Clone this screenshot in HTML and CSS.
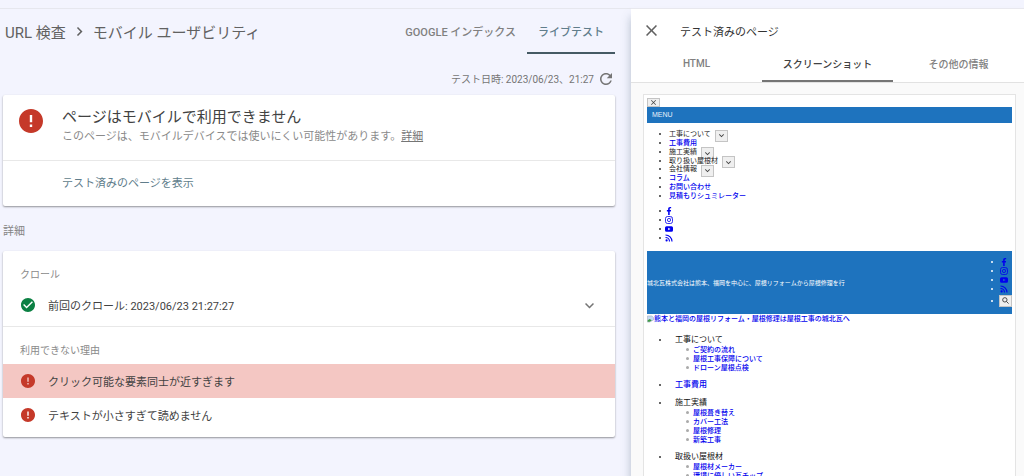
FILE: index.html
```html
<!DOCTYPE html>
<html lang="ja">
<head>
<meta charset="utf-8">
<title>URL 検査</title>
<link rel="stylesheet" href="styles.css">
</head>
<body>
<svg class="sprite" aria-hidden="true">
  <symbol id="error" viewBox="2 2 20 20"><path d="M12 2C6.48 2 2 6.48 2 12s4.48 10 10 10 10-4.48 10-10S17.52 2 12 2zm1 15h-2v-2h2v2zm0-4h-2V7h2v6z"/></symbol>
  <symbol id="check" viewBox="2 2 20 20"><path d="M12 2C6.48 2 2 6.48 2 12s4.48 10 10 10 10-4.48 10-10S17.52 2 12 2zm-2 15l-5-5 1.41-1.41L10 14.17l7.59-7.59L19 8l-9 9z"/></symbol>
  <symbol id="refresh" viewBox="4 4 16 16"><path d="M17.65 6.35C16.2 4.9 14.21 4 12 4c-4.42 0-7.99 3.58-7.99 8s3.57 8 7.99 8c3.73 0 6.84-2.55 7.73-6h-2.08c-.82 2.33-3.04 4-5.65 4-3.31 0-6-2.69-6-6s2.69-6 6-6c1.66 0 3.14.69 4.22 1.78L13 11h7V4l-2.35 2.35z"/></symbol>
  <symbol id="close" viewBox="5 5 14 14"><path d="M19 6.41L17.59 5 12 10.59 6.41 5 5 6.41 10.59 12 5 17.59 6.41 19 12 13.41 17.59 19 19 17.59 13.41 12z"/></symbol>
  <symbol id="down" viewBox="6 6 12 12"><path d="M16.59 8.59L12 13.17 7.41 8.59 6 10l6 6 6-6z"/></symbol>
  <symbol id="right" viewBox="6 6 12 12"><path d="M10 6L8.59 7.41 13.17 12l-4.58 4.59L10 18l6-6z"/></symbol>
  <symbol id="facebook" viewBox="-96 0 512 512"><path d="M279.14 288l14.22-92.66h-88.91v-60.13c0-25.35 12.42-50.06 52.24-50.06h40.42V6.26S260.43 0 225.36 0c-73.22 0-121.08 44.38-121.08 124.72v70.62H22.89V288h81.39v224h100.17V288z"/></symbol>
  <symbol id="instagram" viewBox="0 0 16 16"><g fill="none" stroke="currentColor" stroke-width="1.6"><rect x="1" y="1" width="14" height="14" rx="4"/><circle cx="8" cy="8" r="3.2"/></g><circle cx="12" cy="4" r="1"/></symbol>
  <symbol id="youtube" viewBox="0 0 16 16"><path fill-rule="evenodd" d="M3 2.5h10a3 3 0 0 1 3 3v5a3 3 0 0 1-3 3H3a3 3 0 0 1-3-3v-5a3 3 0 0 1 3-3zM6.4 5.4v5.2L11 8z"/></symbol>
  <symbol id="rss" viewBox="0 0 16 16"><circle cx="3.2" cy="12.8" r="2.2"/><g fill="none" stroke="currentColor" stroke-width="2.3"><path d="M1 7a8 8 0 0 1 8 8M1 2a13 13 0 0 1 13 13"/></g></symbol>
  <symbol id="search" viewBox="0 0 16 16"><g fill="none" stroke="currentColor" stroke-width="2.2"><circle cx="6.5" cy="6.5" r="5"/><path d="M10 10l5 5"/></g></symbol>
</svg>

<div class="app">
  <main class="main">
    <header class="topbar">
      <nav class="crumbs">
        <a href="#">URL 検査</a>
        <svg class="crumb-arrow"><use href="#right"/></svg>
        <span>モバイル ユーザビリティ</span>
      </nav>
      <div class="modes">
        <button class="mode">GOOGLE インデックス</button>
        <button class="mode mode-active">ライブテスト</button>
      </div>
    </header>
    <div class="tested">
      <span>テスト日時: 2023/06/23、21:27</span>
      <button class="icon-button" aria-label="再テスト"><svg class="refresh"><use href="#refresh"/></svg></button>
    </div>

    <section class="card">
      <div class="verdict">
        <svg class="verdict-icon"><use href="#error"/></svg>
        <div>
          <h1 class="verdict-title">ページはモバイルで利用できません</h1>
          <p class="verdict-text">このページは、モバイルデバイスでは使いにくい可能性があります。<a href="#">詳細</a></p>
        </div>
      </div>
      <button class="view-page">テスト済みのページを表示</button>
    </section>

    <h2 class="section-title">詳細</h2>

    <section class="card">
      <h3 class="label">クロール</h3>
      <button class="row row-crawl">
        <svg class="row-icon ok"><use href="#check"/></svg>
        <span class="row-text">前回のクロール: 2023/06/23 21:27:27</span>
        <svg class="expand"><use href="#down"/></svg>
      </button>
      <div class="reasons">
        <h3 class="label">利用できない理由</h3>
        <button class="row row-selected"><svg class="row-icon"><use href="#error"/></svg><span class="row-text">クリック可能な要素同士が近すぎます</span></button>
        <button class="row"><svg class="row-icon"><use href="#error"/></svg><span class="row-text">テキストが小さすぎて読めません</span></button>
      </div>
    </section>
  </main>

  <aside class="panel">
    <header class="panel-head">
      <button class="icon-button" aria-label="閉じる"><svg class="close"><use href="#close"/></svg></button>
      <h2 class="panel-title">テスト済みのページ</h2>
    </header>
    <div class="tabs" role="tablist">
      <button class="tab" role="tab">HTML</button>
      <button class="tab tab-active" role="tab" aria-selected="true">スクリーンショット</button>
      <button class="tab" role="tab">その他の情報</button>
    </div>
    <div class="panel-body">
      <div class="shot">
        <button class="mini mini-close" aria-label="閉じる"><svg><use href="#close"/></svg></button>
        <div class="menu-bar">MENU</div>
        <ul class="list nav-list">
          <li>工事について<button class="mini" aria-label="開く"><svg><use href="#down"/></svg></button></li>
          <li><a href="#">工事費用</a></li>
          <li>施工実績<button class="mini" aria-label="開く"><svg><use href="#down"/></svg></button></li>
          <li>取り扱い屋根材<button class="mini" aria-label="開く"><svg><use href="#down"/></svg></button></li>
          <li>会社情報<button class="mini" aria-label="開く"><svg><use href="#down"/></svg></button></li>
          <li><a href="#">コラム</a></li>
          <li><a href="#">お問い合わせ</a></li>
          <li><a href="#">見積もりシュミレーター</a></li>
        </ul>
        <ul class="list social">
          <li><a href="#" aria-label="Facebook"><svg><use href="#facebook"/></svg></a></li>
          <li><a href="#" aria-label="Instagram"><svg><use href="#instagram"/></svg></a></li>
          <li><a href="#" aria-label="YouTube"><svg><use href="#youtube"/></svg></a></li>
          <li><a href="#" aria-label="RSS"><svg><use href="#rss"/></svg></a></li>
        </ul>
        <div class="banner">
          <p class="banner-text">城北瓦株式会社は熊本、福岡を中心に、屋根リフォームから屋根修理を行</p>
          <ul class="list social banner-social">
            <li><a href="#" aria-label="Facebook"><svg><use href="#facebook"/></svg></a></li>
            <li><a href="#" aria-label="Instagram"><svg><use href="#instagram"/></svg></a></li>
            <li><a href="#" aria-label="YouTube"><svg><use href="#youtube"/></svg></a></li>
            <li><a href="#" aria-label="RSS"><svg><use href="#rss"/></svg></a></li>
            <li><button class="mini mini-search" aria-label="検索"><svg><use href="#search"/></svg></button></li>
          </ul>
        </div>
        <a class="logo" href="#"><svg viewBox="0 0 8 8"><path fill="#c5d9f5" stroke="#9aa5b5" stroke-width=".6" d="M.5.5h5l2 2V5L3 7.5H.5z"/><path fill="#3f9a42" d="M.8 7.2V5.5L3 4l2.5 1.5L3 7.2z"/></svg>熊本と福岡の屋根リフォーム・屋根修理は屋根工事の城北瓦へ</a>
        <ul class="site-map">
          <li><span class="group">工事について</span>
            <ul class="sub"><li><a href="#">ご契約の流れ</a></li><li><a href="#">屋根工事保障について</a></li><li><a href="#">ドローン屋根点検</a></li></ul>
          </li>
          <li><a class="group" href="#">工事費用</a></li>
          <li><span class="group">施工実績</span>
            <ul class="sub"><li><a href="#">屋根葺き替え</a></li><li><a href="#">カバー工法</a></li><li><a href="#">屋根修理</a></li><li><a href="#">新築工事</a></li></ul>
          </li>
          <li><span class="group">取扱い屋根材</span>
            <ul class="sub"><li><a href="#">屋根材メーカー</a></li><li><a href="#">環境に優しい瓦チップ</a></li></ul>
          </li>
        </ul>
      </div>
    </div>
  </aside>
</div>
</body>
</html>
```
FILE: styles.css
```css
* { box-sizing: border-box; margin: 0; padding: 0; }
body {
  background: #f3f4fe;
  color: #424242;
  font-family: Roboto, "Noto Sans CJK JP", sans-serif;
  font-size: 11px;
}
button { border: 0; background: none; color: inherit; font: inherit; cursor: pointer; }
ul { list-style: none; }
svg { display: block; flex: none; fill: currentColor; }
.sprite { position: absolute; width: 0; height: 0; }

.app {
  display: grid;
  grid-template-columns: 631fr 393fr;
  height: 100vh;
  padding-top: 8px;
  overflow: hidden;
}

.main { border-top: 1px solid #e6e7ee; padding: 0 16px 0 3px; }
.topbar { display: flex; justify-content: space-between; height: 45px; }
.crumbs { display: flex; align-items: center; gap: 9px; padding: 0 0 0 2px; color: #616161; font-size: 15px; }
.crumbs a { color: inherit; text-decoration: none; }
.crumb-arrow { width: 9px; height: 9px; }
.modes { display: flex; }
.mode { padding: 0 11px; border-bottom: 2px solid transparent; color: #808080; font-weight: 500; }
.mode-active { border-color: #455a64; color: #607d8b; }
.tested {
  display: flex;
  align-items: center;
  justify-content: flex-end;
  gap: 6px;
  height: 41px;
  padding: 8px 3px 0 0;
  color: #757575;
  font-size: 10px;
}
.refresh { width: 12px; height: 12px; }

.card { background: #fff; border-radius: 2px; box-shadow: 0 1px 2px rgba(0, 0, 0, .4); }
.verdict { display: flex; align-items: flex-start; gap: 19px; padding: 11px 16px 14px; border-bottom: 1px solid #e8e8e8; }
.verdict-icon { width: 24px; height: 24px; margin-top: 3px; color: #c53929; }
.verdict-title { font-size: 15px; font-weight: 400; line-height: 22px; color: #424242; }
.verdict-text { line-height: 18px; color: #8a8a8a; }
.verdict-text a { color: #757575; }
.view-page { display: block; width: 100%; padding: 0 59px; line-height: 45px; text-align: left; color: #607d8b; }
.section-title { padding-top: 6px; font-size: 11px; font-weight: 400; line-height: 39px; color: #858585; }

.label { padding: 15px 17px 0; font-size: 10px; font-weight: 400; line-height: 18px; color: #8a8a8a; }
.row { display: flex; align-items: center; gap: 13px; width: 100%; height: 33px; padding: 0 21px 0 18px; text-align: left; }
.row-crawl { height: 42px; }
.row-icon { width: 14px; height: 14px; color: #c53929; }
.row-icon.ok { color: #0b8043; }
.row-text { flex: 1; }
.expand { width: 9px; height: 9px; color: #757575; }
.reasons { border-top: 1px solid #e8e8e8; padding-bottom: 6px; }
.reasons .label { padding-bottom: 4px; }
.row-selected { height: 34px; background: #f4c7c3; }

.panel {
  display: flex;
  flex-direction: column;
  min-height: 0;
  border-top: 1px solid #e8e8ee;
  background: #fff;
  box-shadow: 0 9px 9px rgba(60, 90, 110, .35);
}
.panel-head { display: flex; align-items: center; gap: 23px; height: 38px; padding: 5px 15px 0; }
.panel-title { font-size: 11px; font-weight: 400; color: #333; }
.close { width: 11px; height: 11px; color: #616161; }
.tabs { display: grid; grid-template-columns: repeat(3, 1fr); height: 36px; border-bottom: 1px solid #e2e2e2; }
.tab { border-bottom: 2px solid transparent; color: #808080; font-size: 10px; font-weight: 500; }
.tab-active { border-color: #757575; color: #424242; }
.panel-body { flex: 1; min-height: 0; padding: 11px 8px 0 12px; background: #fafafa; overflow: hidden; }

/* Page preview */
.shot {
  padding: 3px;
  border: 1px solid #e4e4e4;
  background: #fff;
  color: #222;
  font-family: "Liberation Sans", "Noto Sans CJK JP", sans-serif;
  font-size: 7px;
}
.shot a { color: #00e; text-decoration: none; font-weight: 500; }
.mini {
  display: flex;
  align-items: center;
  justify-content: center;
  width: 13px;
  height: 12px;
  margin: 0 0 -3px 4px;
  border: 1px solid #c4c4c4;
  background: #efefef;
  color: #444;
}
.mini svg { width: 5px; height: 5px; }
.mini-close { height: 9px; margin: 0; }
.menu-bar { padding-left: 5px; background: #1e73be; color: #e6f0fa; line-height: 16px; }
.list li { display: flex; align-items: center; }
.list li::before { content: ""; flex: none; width: 2px; height: 2px; border-radius: 50%; background: #333; }
.nav-list { display: grid; grid-auto-rows: 1fr; height: 70px; margin-top: 7px; padding-left: 12px; line-height: 8px; }
.nav-list li { min-height: 0; }
.nav-list li::before { margin-right: 8px; }
.social { margin-top: 6px; padding-left: 12px; }
.social li { height: 9px; }
.social li::before { margin-right: 4px; }
.social a svg { width: 8px; height: 8px; }
.banner { display: flex; align-items: center; justify-content: space-between; height: 63px; margin-top: 9px; background: #1e73be; color: #fff; }
.banner-text { font-size: 6px; white-space: nowrap; }
.banner-social { margin: 0; padding: 0; }
.banner-social li::before { margin-right: 7px; background: #fff; }
.banner-social li:last-child { height: 14px; }
.banner-social li:last-child::before { margin-right: 6px; }
.mini-search { margin: 0; }
.mini-search svg { width: 7px; height: 7px; }
.logo { display: flex; align-items: center; line-height: 10px; white-space: nowrap; }
.logo svg { width: 7px; height: 8px; }
.site-map { display: grid; gap: 8px; margin-top: 11px; padding-left: 28px; }
.group { display: flex; align-items: center; font-size: 8px; line-height: 10px; color: #111; }
.group::before { content: ""; width: 2px; height: 2px; margin: 0 14px 0 -16px; border-radius: 50%; background: #333; }
.sub { padding-left: 11px; line-height: 9px; }
.sub li { display: flex; align-items: center; gap: 4px; }
.sub li::before { content: ""; width: 3px; height: 3px; border-radius: 50%; background: #aaa; }
```
